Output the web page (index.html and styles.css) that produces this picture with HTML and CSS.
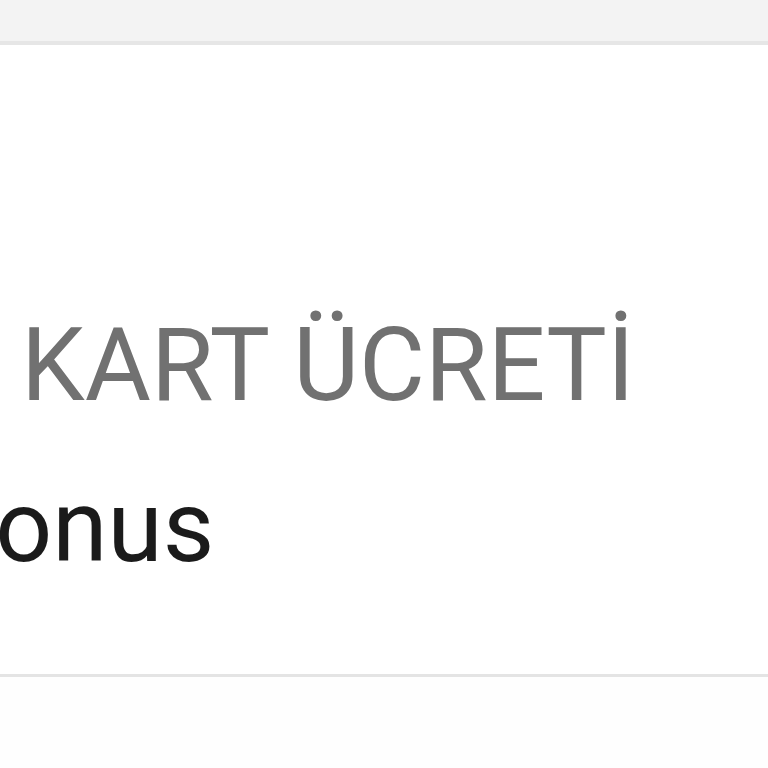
FILE: index.html
```html
<!DOCTYPE html>
<html lang="tr">
<head>
<meta charset="utf-8">
<link rel="stylesheet" href="styles.css">
</head>
<body>
<div class="topbar"></div>
<section class="card">
  <div class="row">
    <div class="label">KART ÜCRETİ</div>
    <div class="value">Bonus</div>
  </div>
</section>
<div class="bottom"></div>
</body>
</html>
```
FILE: styles.css
```css
html, body {
  margin: 0;
  padding: 0;
  background: #fefefe;
  font-family: Roboto, "Noto Sans", sans-serif;
  overflow: hidden;
}
.topbar {
  height: 41px;
  background: #f3f3f3;
  border-bottom: 4px solid #e6e6e6;
  box-shadow: 0 3px 4px rgba(0,0,0,0.04);
}
.card {
  background: #ffffff;
  height: 629px;
  border-bottom: 3px solid #e4e4e4;
  overflow: hidden;
  white-space: nowrap;
}
.row {
  padding-top: 259px;
  display: flex;
  flex-direction: column;
  gap: 38px;
}
.label {
  font-size: 101.5px;
  line-height: 123px;
  color: #717171;
  padding-left: 21px;
}
.value {
  font-size: 100px;
  line-height: 123px;
  color: #1b1b1b;
  margin-left: -67px;
}
.bottom {
  height: 100px;
  background: #fefefe;
}
```
